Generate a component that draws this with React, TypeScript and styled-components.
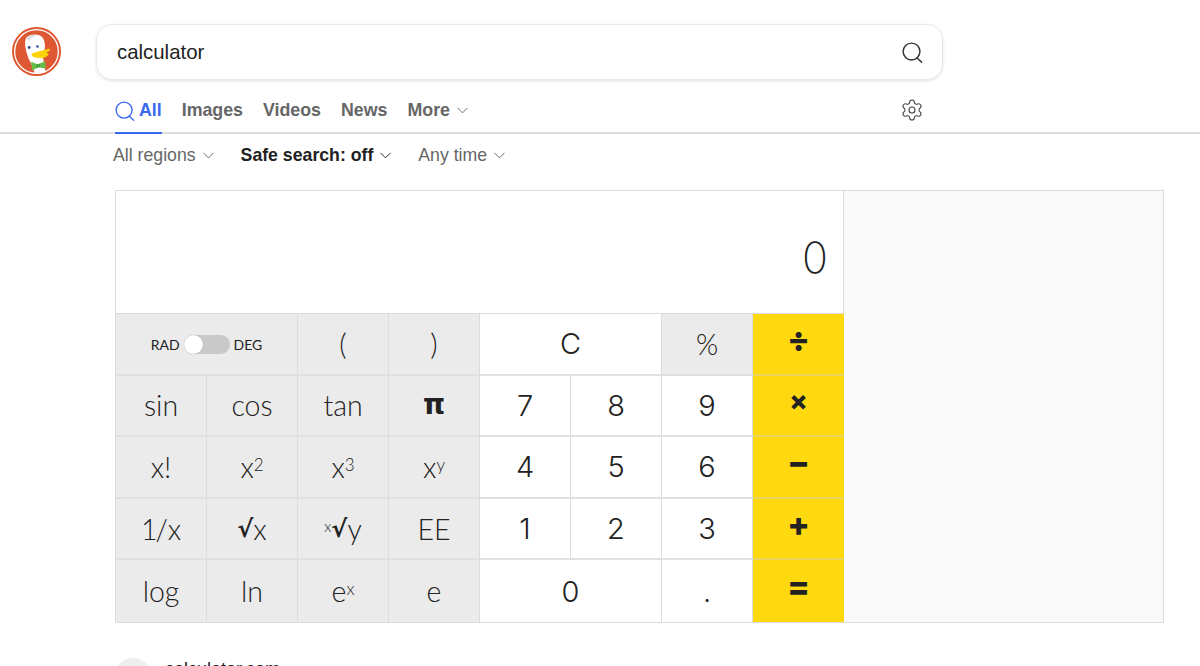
import React from "react";
import styled, { createGlobalStyle } from "styled-components";
import { ChevronDown, Settings } from "lucide-react";

const Global = createGlobalStyle`
  html, body { margin: 0; padding: 0; background: #fff; overflow: hidden; height: 666px; }
  body { font-family: "Liberation Sans", Arial, sans-serif; color: #222; }
`;

const Page = styled.div`
  width: 1200px;
  height: 666px;
  overflow: hidden;
`;
const Top = styled.header`
  display: flex;
  align-items: center;
  padding: 24px 0 0 12px;
  gap: 35px;
`;
const LogoSvg = styled.svg`
  width: 49px;
  height: 49px;
  flex: none;
  margin-top: -1px;
`;
const SearchBox = styled.div`
  width: 847px;
  height: 56px;
  box-sizing: border-box;
  border: 1px solid #e8e8e8;
  border-radius: 16px;
  box-shadow: 0 1px 3px rgba(0, 0, 0, 0.12);
  display: flex;
  align-items: center;
  justify-content: space-between;
  padding: 0 19px 0 20px;
  font-size: 20.4px;
  color: #222;
`;
const Nav = styled.nav`
  height: 53px;
  margin-top: 1px;
  box-sizing: border-box;
  border-bottom: 2px solid #dedede;
  display: flex;
  align-items: stretch;
  padding-left: 115px;
`;
const Tab = styled.a<{ $active?: boolean }>`
  display: flex;
  align-items: center;
  gap: 3px;
  height: 53px;
  box-sizing: border-box;
  padding-top: 8px;
  margin-right: 20px;
  font-size: 17.8px;
  font-weight: 700;
  color: ${(p) => (p.$active ? "#3969ef" : "#666")};
  border-bottom: 2px solid ${(p) => (p.$active ? "#3969ef" : "transparent")};
  svg { color: #666; flex: none; }
`;
const TabIcon = styled.span`
  display: flex;
  margin-right: 1px;
`;
const Gear = styled.span`
  margin-left: auto;
  margin-right: 276px;
  display: flex;
  align-items: center;
  padding-top: 7px;
  color: #444;
`;
const Filters = styled.div`
  display: flex;
  align-items: center;
  height: 42px;
  padding-left: 113px;
`;
const Filter = styled.span<{ $on?: boolean }>`
  display: flex;
  align-items: center;
  gap: 3px;
  margin-right: 23px;
  font-size: 17.7px;
  font-weight: ${(p) => (p.$on ? 700 : 400)};
  color: ${(p) => (p.$on ? "#222" : "#666")};
  svg { color: ${(p) => (p.$on ? "#222" : "#666")}; flex: none; }
`;
const Calc = styled.section`
  margin: 14px 0 0 115px;
  width: 1049px;
  height: 433px;
  box-sizing: border-box;
  border: 1px solid #dcdcdc;
  display: flex;
  font-family: Lato, "Liberation Sans", sans-serif;
  color: #222;
`;
const Main = styled.div`
  width: 728px;
  flex: none;
  display: flex;
  flex-direction: column;
  border-right: 1px solid #dcdcdc;
  box-sizing: border-box;
`;
const Side = styled.div`
  flex: 1;
  background: #f9f9f9;
`;
const Display = styled.div`
  height: 123px;
  box-sizing: border-box;
  border-bottom: 1px solid #dcdcdc;
  display: flex;
  align-items: flex-end;
  justify-content: flex-end;
  padding: 0 15px 32px 0;
  font-family: Inter, sans-serif;
  font-size: 43px;
  font-weight: 200;
  line-height: 48px;
  color: #222;
`;
const Keys = styled.div`
  flex: 1;
  display: grid;
  grid-template-columns: repeat(8, 91px);
  grid-template-rows: repeat(5, 1fr);
`;
const Key = styled.div<{ $tone: "grey" | "white" | "yellow"; $span?: number; $last?: boolean }>`
  grid-column: span ${(p) => p.$span ?? 1};
  box-sizing: border-box;
  display: flex;
  align-items: center;
  justify-content: center;
  border-bottom: ${(p) => (p.$last ? "none" : "2px solid #e0e0e0")};
  border-right: 1px solid #dcdcdc;
  font-size: 28.5px;
  font-weight: 300;
  background: ${(p) => (p.$tone === "grey" ? "#ebebeb" : p.$tone === "yellow" ? "#ffd90f" : "#fff")};
  ${(p) =>
    p.$tone === "yellow"
      ? "border-right: none; border-bottom-color: #e8d35a; font-family: Inter, sans-serif; font-weight: 800; font-size: 33px; padding-bottom: 10px;"
      : ""}
  ${(p) => (p.$tone === "white" ? "font-family: Inter, sans-serif; font-size: 29px; font-weight: 300;" : "")}
`;
const Times = styled.span`
  font-size: 27px;
`;
const NarrowOne = styled.span`
  letter-spacing: -4px;
  margin-right: 2px;
`;
const Sup = styled.sup`
  font-size: 17px;
  line-height: 0;
  position: relative;
  top: -2px;
`;
const SmallX = styled.sup`
  font-size: 15px;
  line-height: 0;
  position: relative;
  top: -3px;
`;
const Symbol = styled.span<{ $size: number }>`
  font-family: "DejaVu Sans", sans-serif;
  font-weight: 700;
  font-size: ${(p) => p.$size}px;
  line-height: 1;
`;
const ToggleWrap = styled.div`
  display: flex;
  align-items: center;
  gap: 4px;
  font-size: 14px;
  font-weight: 400;
  padding-top: 2px;
`;
const Track = styled.span`
  width: 46px;
  height: 19px;
  border-radius: 10px;
  background: #c9c9c9;
  position: relative;
  display: block;
`;
const Knob = styled.span`
  position: absolute;
  left: 0;
  top: 0;
  width: 19px;
  height: 19px;
  border-radius: 50%;
  background: #fff;
  box-shadow: 0 0 1px rgba(0, 0, 0, 0.3);
`;
const Result = styled.div`
  display: flex;
  align-items: flex-start;
  gap: 14px;
  margin: 35px 0 0 115px;
`;
const Favicon = styled.span`
  width: 36px;
  height: 36px;
  border-radius: 50%;
  background: #eee;
  flex: none;
`;
const Domain = styled.span`
  font-size: 18px;
  color: #222;
  line-height: 20px;
  padding-top: 1px;
`;

const Logo = () => (
  <LogoSvg viewBox="0 0 50 50">
    <circle cx="25" cy="25" r="25" fill="#de5833" />
    <circle cx="25" cy="25" r="22.300" fill="#de5833" stroke="#fff" strokeWidth="1.300" />
    <path d="M14.500 11C19 6.500 29 6.500 32 12C34 16 34 20 33 24L32 30C31 33 34 38 34 46.500L23 47C22 40 17 34 15.500 28C13.500 22 12.500 15 14.500 11z" fill="#fff" />
    <path d="M14.500 11C18 8 23 7.500 26 9C22 9.500 19 11 18 14C16 13.500 15 12.500 14.500 11z" fill="#ddd" />
    <circle cx="17.500" cy="21" r="1.500" fill="#2d4f8e" />
    <circle cx="26" cy="20" r="1.300" fill="#2d4f8e" />
    <path d="M20 27.500C24 25 32 24 38.500 22C39.500 24 37 25.500 34.500 26C36.500 26.500 37.500 27 37 28.500C34 32 29 32.500 25 31.500C21.500 30.500 19.500 29.500 20 27.500z" fill="#fdd20a" />
    <path d="M19.500 35.500L26 38L34 35L34.500 42.500L27 41L20.500 44.500z" fill="#65bc46" />
    <path d="M25 38L28.500 38L28.500 41L25 41.500z" fill="#43a244" />
  </LogoSvg>
);

const SearchIcon = ({ size, color }: { size: number; color: string }) => (
  <svg width={size} height={size} viewBox="0 0 22 22" fill="none" stroke={color} strokeWidth="1.500" strokeLinecap="round">
    <circle cx="10" cy="10" r="8.800" />
    <path d="M15.800 16.800l4.700 4.300" />
  </svg>
);

const Chevron = () => <ChevronDown size={19} strokeWidth={1.2} />;

export default function App() {
  return (
    <Page>
      <Global />
      <Top>
        <Logo />
        <SearchBox>
          calculator
          <SearchIcon size={21} color="#333" />
        </SearchBox>
      </Top>
      <Nav>
        <Tab $active>
          <TabIcon>
            <SearchIcon size={20} color="#3969ef" />
          </TabIcon>
          All
        </Tab>
        <Tab>Images</Tab>
        <Tab>Videos</Tab>
        <Tab>News</Tab>
        <Tab>
          More <Chevron />
        </Tab>
        <Gear>
          <Settings size={24} strokeWidth={1.100} />
        </Gear>
      </Nav>
      <Filters>
        <Filter>
          All regions <Chevron />
        </Filter>
        <Filter $on>
          Safe search: off <Chevron />
        </Filter>
        <Filter>
          Any time <Chevron />
        </Filter>
      </Filters>
      <Calc>
        <Main>
          <Display>0</Display>
          <Keys>
            <Key $tone="grey" $span={2}>
              <ToggleWrap>
                RAD
                <Track>
                  <Knob />
                </Track>
                DEG
              </ToggleWrap>
            </Key>
            <Key $tone="grey">(</Key>
            <Key $tone="grey">)</Key>
            <Key $tone="white" $span={2}>C</Key>
            <Key $tone="grey">%</Key>
            <Key $tone="yellow">÷</Key>

            <Key $tone="grey">sin</Key>
            <Key $tone="grey">cos</Key>
            <Key $tone="grey">tan</Key>
            <Key $tone="grey"><Symbol $size={28}>π</Symbol></Key>
            <Key $tone="white">7</Key>
            <Key $tone="white">8</Key>
            <Key $tone="white">9</Key>
            <Key $tone="yellow"><Times>×</Times></Key>

            <Key $tone="grey">x!</Key>
            <Key $tone="grey">x<Sup>2</Sup></Key>
            <Key $tone="grey">x<Sup>3</Sup></Key>
            <Key $tone="grey">x<Sup>y</Sup></Key>
            <Key $tone="white">4</Key>
            <Key $tone="white">5</Key>
            <Key $tone="white">6</Key>
            <Key $tone="yellow">−</Key>

            <Key $tone="grey"><NarrowOne>1</NarrowOne>/x</Key>
            <Key $tone="grey"><Symbol $size={24}>√</Symbol>x</Key>
            <Key $tone="grey"><SmallX>x</SmallX><Symbol $size={24}>√</Symbol>y</Key>
            <Key $tone="grey">EE</Key>
            <Key $tone="white">1</Key>
            <Key $tone="white">2</Key>
            <Key $tone="white">3</Key>
            <Key $tone="yellow">+</Key>

            <Key $tone="grey" $last>log</Key>
            <Key $tone="grey" $last>ln</Key>
            <Key $tone="grey" $last>e<Sup>x</Sup></Key>
            <Key $tone="grey" $last>e</Key>
            <Key $tone="white" $span={2} $last>0</Key>
            <Key $tone="white" $last>.</Key>
            <Key $tone="yellow" $last>=</Key>
          </Keys>
        </Main>
        <Side />
      </Calc>
      <Result>
        <Favicon />
        <Domain>calculator.com</Domain>
      </Result>
    </Page>
  );
}
